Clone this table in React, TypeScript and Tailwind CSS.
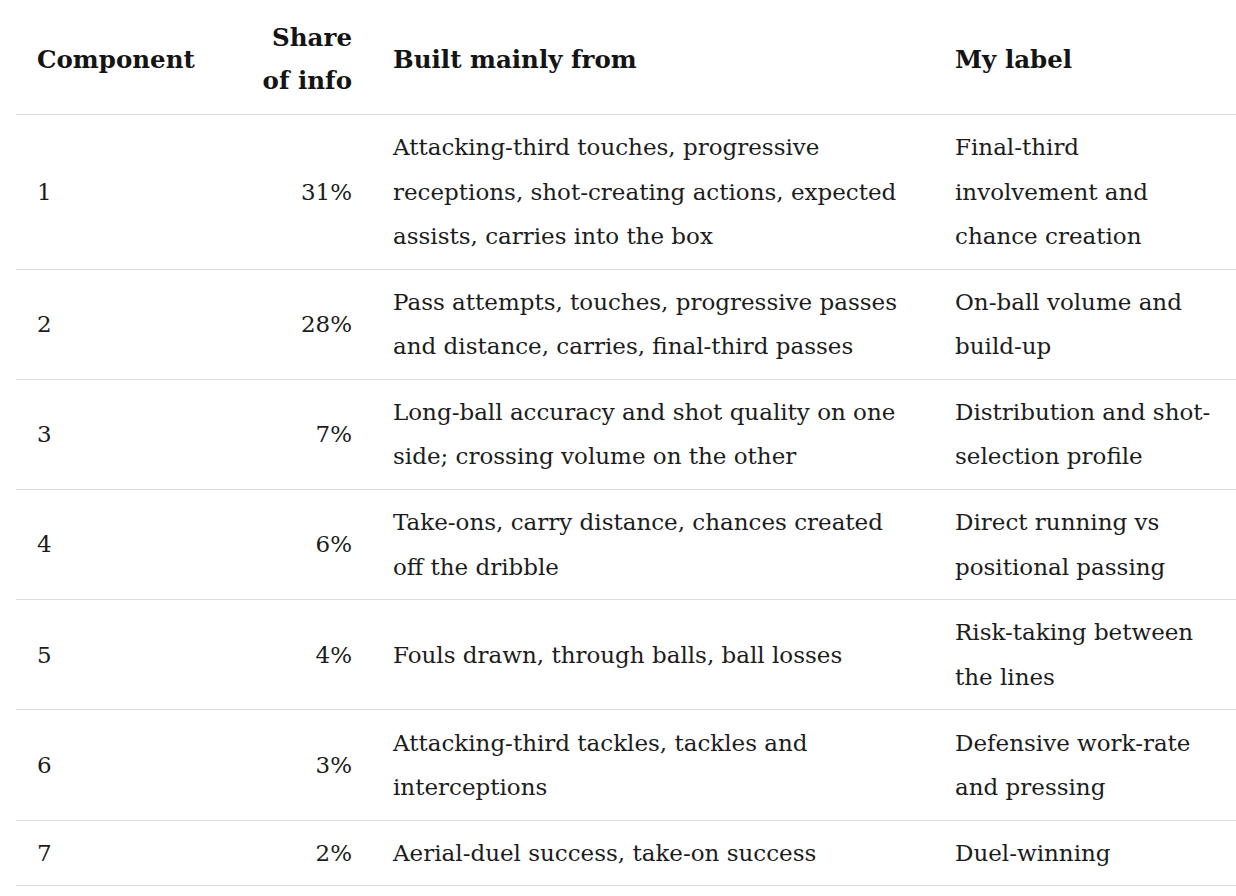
const rows = [
  {
    n: "1",
    share: "31%",
    built: "Attacking-third touches, progressive receptions, shot-creating actions, expected assists, carries into the box",
    label: "Final-third involvement and chance creation",
  },
  {
    n: "2",
    share: "28%",
    built: "Pass attempts, touches, progressive passes and distance, carries, final-third passes",
    label: "On-ball volume and build-up",
  },
  {
    n: "3",
    share: "7%",
    built: "Long-ball accuracy and shot quality on one side; crossing volume on the other",
    label: "Distribution and shot-selection profile",
  },
  {
    n: "4",
    share: "6%",
    built: "Take-ons, carry distance, chances created off the dribble",
    label: "Direct running vs positional passing",
  },
  {
    n: "5",
    share: "4%",
    built: "Fouls drawn, through balls, ball losses",
    label: "Risk-taking between the lines",
  },
  {
    n: "6",
    share: "3%",
    built: "Attacking-third tackles, tackles and interceptions",
    label: "Defensive work-rate and pressing",
  },
  {
    n: "7",
    share: "2%",
    built: "Aerial-duel success, take-on success",
    label: "Duel-winning",
  },
];

export default function App() {
  return (
    <div className="min-h-screen bg-white pl-4 font-['DejaVu_Serif',Georgia,serif] text-[#1c1c1c]">
      <table className="w-[1220px] table-fixed border-collapse text-[23px] leading-[44.5px]">
        <colgroup>
          <col className="w-[202px]" />
          <col className="w-[154px]" />
          <col className="w-[562px]" />
          <col className="w-[302px]" />
        </colgroup>
        <thead>
          <tr className="border-b border-[#dcdcdc] text-[24.5px] leading-[43px] font-bold text-[#141414]">
            <th className="pt-[16px] pb-[12px] pl-[21px] text-left align-middle">Component</th>
            <th className="pt-[16px] pb-[12px] pr-[20px] text-right align-middle">
              Share
              <br />
              of info
            </th>
            <th className="pt-[16px] pb-[12px] pl-[21px] text-left align-middle">Built mainly from</th>
            <th className="pt-[16px] pb-[12px] pl-[21px] text-left align-middle">My label</th>
          </tr>
        </thead>
        <tbody>
          {rows.map((r) => (
            <tr key={r.n} className="border-b border-[#dcdcdc]">
              <td className="py-[10.1px] pl-[21px] align-middle">{r.n}</td>
              <td className="py-[10.1px] pr-[20px] text-right align-middle">{r.share}</td>
              <td className="py-[10.1px] pl-[21px] pr-[18px] align-middle">{r.built}</td>
              <td className="py-[10.1px] pl-[21px] pr-[19px] align-middle">
                <div className="w-[262px]">{r.label}</div>
              </td>
            </tr>
          ))}
        </tbody>
      </table>
    </div>
  );
}
